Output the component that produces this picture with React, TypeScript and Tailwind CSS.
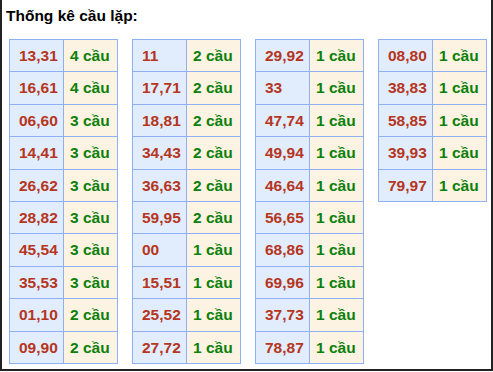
import { Fragment } from "react"

const groups: [string, string][][] = [
  [
    ["13,31", "4 cầu"], ["16,61", "4 cầu"], ["06,60", "3 cầu"], ["14,41", "3 cầu"], ["26,62", "3 cầu"],
    ["28,82", "3 cầu"], ["45,54", "3 cầu"], ["35,53", "3 cầu"], ["01,10", "2 cầu"], ["09,90", "2 cầu"],
  ],
  [
    ["11", "2 cầu"], ["17,71", "2 cầu"], ["18,81", "2 cầu"], ["34,43", "2 cầu"], ["36,63", "2 cầu"],
    ["59,95", "2 cầu"], ["00", "1 cầu"], ["15,51", "1 cầu"], ["25,52", "1 cầu"], ["27,72", "1 cầu"],
  ],
  [
    ["29,92", "1 cầu"], ["33", "1 cầu"], ["47,74", "1 cầu"], ["49,94", "1 cầu"], ["46,64", "1 cầu"],
    ["56,65", "1 cầu"], ["68,86", "1 cầu"], ["69,96", "1 cầu"], ["37,73", "1 cầu"], ["78,87", "1 cầu"],
  ],
  [
    ["08,80", "1 cầu"], ["38,83", "1 cầu"], ["58,85", "1 cầu"], ["39,93", "1 cầu"], ["79,97", "1 cầu"],
  ],
]

function CauTable({ rows }: { rows: [string, string][] }) {
  return (
    <div className="grid grid-cols-[54px_54px] self-start border-l border-t border-[#8fb0f2]">
      {rows.map(([pair, count]) => (
        <Fragment key={pair}>
          <div className="h-[32.4px] flex items-center pl-[9px] bg-[#e1edfd] border-r border-b border-[#8fb0f2] text-[#b5351d]">
            {pair}
          </div>
          <div className="h-[32.4px] flex items-center pl-[6px] bg-[#fdf3e2] border-r border-b border-[#8fb0f2] text-[#0b800b]">
            {count}
          </div>
        </Fragment>
      ))}
    </div>
  )
}

export default function App() {
  return (
    <div className="w-[493px] h-[372px] bg-white" style={{ fontFamily: '"Liberation Sans", Arial, sans-serif' }}>
      <div className="h-[371px] border-x-2 border-b-2 border-[#222]">
        <div className="pl-[4px] pt-[6px] h-[39px] text-[15.5px] leading-[20px] font-bold text-black">Thống kê cầu lặp:</div>
        <div className="flex gap-[14px] pl-[7px] text-[15.5px] font-bold">
          {groups.map((rows, i) => (
            <CauTable key={i} rows={rows} />
          ))}
        </div>
      </div>
    </div>
  )
}
